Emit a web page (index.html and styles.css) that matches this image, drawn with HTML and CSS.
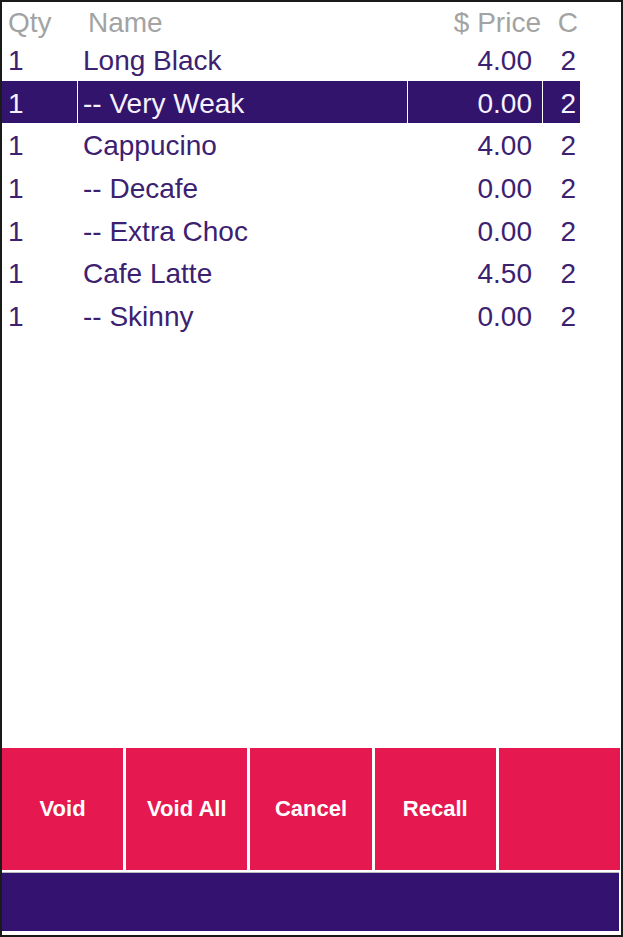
FILE: index.html
```html
<!DOCTYPE html>
<html>
<head>
    <title>Order</title>
    <meta charset="UTF-8">
    <meta name="viewport" content="width=device-width, initial-scale=1.0">
    <link rel="stylesheet" href="styles.css">
</head>
<body>
<div class="frame">
    <div class="order">
        <div class="row head">
            <div class="qty">Qty</div>
            <div class="name">Name</div>
            <div class="price">$ Price</div>
            <div class="course">C</div>
        </div>
        <div class="row">
            <div class="qty">1</div>
            <div class="name">Long Black</div>
            <div class="price">4.00</div>
            <div class="course">2</div>
        </div>
        <div class="row selected">
            <div class="qty">1</div>
            <div class="name">-- Very Weak</div>
            <div class="price">0.00</div>
            <div class="course">2</div>
        </div>
        <div class="row">
            <div class="qty">1</div>
            <div class="name">Cappucino</div>
            <div class="price">4.00</div>
            <div class="course">2</div>
        </div>
        <div class="row">
            <div class="qty">1</div>
            <div class="name">-- Decafe</div>
            <div class="price">0.00</div>
            <div class="course">2</div>
        </div>
        <div class="row">
            <div class="qty">1</div>
            <div class="name">-- Extra Choc</div>
            <div class="price">0.00</div>
            <div class="course">2</div>
        </div>
        <div class="row">
            <div class="qty">1</div>
            <div class="name">Cafe Latte</div>
            <div class="price">4.50</div>
            <div class="course">2</div>
        </div>
        <div class="row">
            <div class="qty">1</div>
            <div class="name">-- Skinny</div>
            <div class="price">0.00</div>
            <div class="course">2</div>
        </div>
    </div>

    <div class="buttons">
        <button class="btn">Void</button>
        <button class="btn">Void All</button>
        <button class="btn">Cancel</button>
        <button class="btn">Recall</button>
        <button class="btn"></button>
    </div>
    <div class="bar"></div>
</div>
</body>
</html>
```

FILE: styles.css
```css
html, body {
    margin: 0;
    background-color: #fff;
}

.frame {
    box-sizing: border-box;
    width: 623px;
    height: 937px;
    border: 2px solid #1a1a1a;
    display: flex;
    flex-direction: column;
    font-family: "Liberation Sans", Arial, sans-serif;
}

.order {
    flex: 1;
    display: flex;
    flex-direction: column;
    gap: 1px;
}

.row {
    display: grid;
    grid-template-columns: 75px 329px 134px 37px;
    column-gap: 1px;
    height: 41.67px;
    font-size: 28px;
    color: #3c2170;
}
.row > div {
    box-sizing: border-box;
    display: flex;
    align-items: center;
    padding-top: 4px;
    white-space: nowrap;
}
.row.head {
    height: 35.33px;
    color: #a3a3a3;
}
.row.head > div {
    padding-top: 5px;
}
.row.selected > div {
    background-color: #33146c;
    color: #f6f2ff;
}

.qty {
    padding-left: 6px;
}
.name {
    padding-left: 5px;
}
.price {
    justify-content: flex-end;
    padding-right: 10px;
}
.course {
    justify-content: flex-end;
    padding-right: 4px;
}
.head .name {
    padding-left: 10px;
}
.head .price {
    padding-right: 1px;
}
.head .course {
    padding-right: 2px;
}

.buttons {
    display: grid;
    grid-template-columns: repeat(5, 1fr);
    column-gap: 3px;
    height: 122px;
    padding-right: 1px;
}

.btn {
    border: none;
    margin: 0;
    padding: 0;
    background-color: #e5194f;
    color: #fff;
    font-family: "Liberation Sans", Arial, sans-serif;
    font-weight: bold;
    font-size: 22px;
}

.bar {
    margin-top: 2px;
    margin-right: 2px;
    margin-bottom: 4px;
    height: 58px;
    background-color: #331270;
    border-top: 1px solid #bbb;
}
```
